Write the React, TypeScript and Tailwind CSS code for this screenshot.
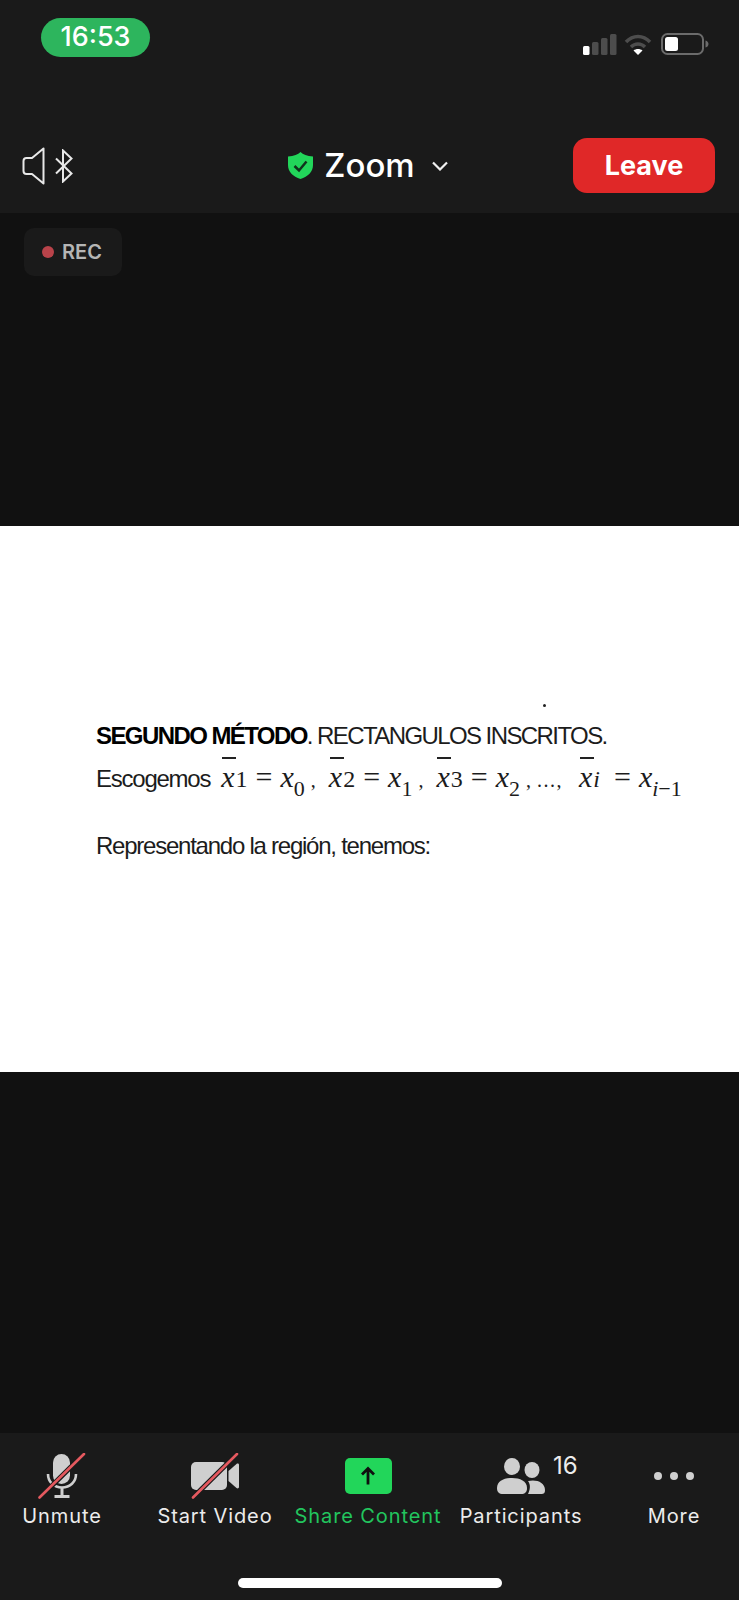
const MicIcon = () => (
  <svg width="48" height="46" viewBox="0 0 48 46" fill="none">
    <rect x="15" y="1" width="17" height="30" rx="8.500" fill="#cfcfcf" />
    <path d="M10 21c0 8 6 13.500 14 13.500S38 29 38 21" stroke="#cfcfcf" strokeWidth="2.600" />
    <path d="M24 35v7M16.500 43.500h15" stroke="#cfcfcf" strokeWidth="3" />
    <path d="M3 43.500 45 2" stroke="#1a1a1a" strokeWidth="5" />
    <path d="M1.500 44.500 46 1" stroke="#e5595f" strokeWidth="2.600" strokeLinecap="round" />
  </svg>
)

const VideoIcon = () => (
  <svg width="48" height="46" viewBox="0 0 48 46" fill="none">
    <rect x="0" y="9" width="36" height="28" rx="5" fill="#cfcfcf" />
    <path d="M37.500 18 45.500 11c1-.8 2.500-.3 2.500 1v22c0 1.300-1.500 1.800-2.500 1l-8-7z" fill="#cfcfcf" />
    <path d="M3 43.500 45 2" stroke="#1a1a1a" strokeWidth="5" />
    <path d="M2 44.500 46 1" stroke="#e5595f" strokeWidth="2.600" strokeLinecap="round" />
  </svg>
)

const ShareIcon = () => (
  <div className="flex h-[36px] w-[47px] items-center justify-center rounded-[5px] bg-[#22d65a]">
    <svg width="16" height="20" viewBox="0 0 16 20" fill="none">
      <path d="M8 18.500V3M2 8.500 8 2.500l6 6" stroke="#0f0f0f" strokeWidth="2.800" />
    </svg>
  </div>
)

const PeopleIcon = () => (
  <svg width="48" height="36" viewBox="0 0 48 36" fill="none">
    <ellipse cx="15" cy="8.500" rx="8" ry="8.500" fill="#cfcfcf" />
    <ellipse cx="35" cy="12" rx="7.500" ry="8" fill="#cfcfcf" />
    <path d="M0 30c0-7 7-10 15-10s15 3 15 10c0 4-2 6-6 6H6c-4 0-6-2-6-6z" fill="#cfcfcf" />
    <path d="M31 23c8-2 17 1 17 9 0 3-1 4-4 4H31c2-4 3-9 0-13z" fill="#cfcfcf" />
  </svg>
)

const DotsIcon = () => (
  <div className="flex h-[46px] items-center gap-[8px]">
    <span className="h-[8px] w-[8px] rounded-full bg-[#cfcfcf]" />
    <span className="h-[8px] w-[8px] rounded-full bg-[#cfcfcf]" />
    <span className="h-[8px] w-[8px] rounded-full bg-[#cfcfcf]" />
  </div>
)

const tabs = [
  { label: 'Unmute', icon: <MicIcon />, color: 'text-[#ececec]' },
  { label: 'Start Video', icon: <VideoIcon />, color: 'text-[#ececec]' },
  { label: 'Share Content', icon: <ShareIcon />, color: 'text-[#22c55e]' },
  { label: 'Participants', icon: <PeopleIcon />, color: 'text-[#ececec]', badge: '16' },
  { label: 'More', icon: <DotsIcon />, color: 'text-[#ececec]' },
]

// one x with the little bar on top of it
const BarX = ({ sub, italic }: { sub: string; italic?: boolean }) => (
  <span className="relative inline-flex items-baseline">
    <span className="absolute left-[1px] top-[0px] h-[2px] w-[14px] bg-[#222]" />
    <i>x</i>
    <span className={`ml-[1px] text-[24px] ${italic ? 'mr-[6px] italic' : ''}`}>{sub}</span>
  </span>
)

const Eq = ({ sub, last }: { sub: string; last?: boolean }) => (
  <span className="ml-[8px] inline-flex items-baseline">
    <span className="mr-[8px]">=</span>
    <i>x</i>
    {last ? (
      <span className="relative top-[9px] text-[22px]">
        <i>i</i>−1
      </span>
    ) : (
      <span className="relative top-[9px] text-[22px]">{sub}</span>
    )}
    {!last && <span className="ml-[6px] text-[20px]">,</span>}
  </span>
)

export default function App() {
  return (
    <div className="flex h-[1600px] w-[739px] flex-col overflow-hidden bg-[#111111] font-['Inter',sans-serif]">
      <header className="flex h-[213px] flex-col bg-[#1a1a1a]">
        <div className="flex items-start justify-between pl-[41px] pr-[30px] pt-[18px]">
          <div className="flex h-[39px] w-[109px] items-center justify-center rounded-full bg-[#2db55d] text-[27px] font-medium text-white">
            16:53
          </div>
          <div className="mt-[15px] flex items-center">
            <svg width="34" height="21" viewBox="0 0 34 21">
              <rect x="0" y="12" width="6.500" height="9" rx="1.500" fill="#fff" />
              <rect x="9" y="8" width="6.500" height="13" rx="1.500" fill="#4d4d4d" />
              <rect x="18" y="4" width="6.500" height="17" rx="1.500" fill="#4d4d4d" />
              <rect x="27" y="0" width="6.500" height="21" rx="1.500" fill="#4d4d4d" />
            </svg>
            <svg className="ml-[7px]" width="28" height="21" viewBox="0 0 28 21" fill="none">
              <path d="M2 8c7-7.500 17-7.500 24 0" stroke="#4d4d4d" strokeWidth="3.500" />
              <path d="M7 13c4-4 10-4 14 0" stroke="#4d4d4d" strokeWidth="3.500" />
              <path d="M9.500 16.500 14 21l4.500-4.500c-2.500-2-6.500-2-9 0z" fill="#fff" />
            </svg>
            <svg className="ml-[9px]" width="48" height="22" viewBox="0 0 48 22" fill="none">
              <rect x="1" y="1" width="41" height="20" rx="5.500" stroke="#6b6b6b" strokeWidth="2" />
              <rect x="4" y="4" width="13" height="14" rx="2.500" fill="#fff" />
              <path d="M44.500 7.500c2 .5 3 2 3 3.500s-1 3-3 3.500z" fill="#6b6b6b" />
            </svg>
          </div>
        </div>
        <div className="mt-[81px] flex items-center justify-between pl-[22px] pr-[24px]">
          <div className="flex w-[140px] items-center gap-[10px]">
            <svg width="23" height="38" viewBox="0 0 23 38" fill="none">
              <path d="M21.500 1.500v35L10 27H4.500C2.500 27 1.500 26 1.500 24V14c0-2 1-3 3-3H10z" stroke="#e8e8e8" strokeWidth="2" strokeLinejoin="round" />
            </svg>
            <svg width="18" height="34" viewBox="0 0 18 34" fill="none">
              <path d="M1 9.500 16.500 24.500 8 32.500V1.500l8.500 8L1 24.500" stroke="#e8e8e8" strokeWidth="2" />
            </svg>
          </div>
          <div className="ml-[1px] flex items-center">
            <svg width="25" height="27" viewBox="0 0 25 27">
              <path d="M12.500 0c2.500 2.500 6.500 4 12.500 4.500V13c0 7-5 11.500-12.500 14C5 24.500 0 20 0 13V4.500C6 4 10 2.500 12.500 0z" fill="#22d65a" />
              <path d="M6.500 14 11 18.500l7.500-9" fill="none" stroke="#10331c" strokeWidth="2.500" />
            </svg>
            <span className="ml-[11px] text-[33px] font-medium leading-none text-white">Zoom</span>
            <svg className="ml-[17px]" width="16" height="10" viewBox="0 0 16 10" fill="none">
              <path d="M1 1.500 8 8.500l7-7" stroke="#f0f0f0" strokeWidth="2.200" />
            </svg>
          </div>
          <button className="flex h-[55px] w-[142px] items-center justify-center rounded-[14px] bg-[#e02828] pt-[1px] text-[27px] font-bold text-white">
            Leave
          </button>
        </div>
      </header>

      <main className="flex flex-1 flex-col">
        <div className="h-[313px] pl-[24px] pt-[15px]">
          <div className="flex h-[48px] w-[98px] items-center gap-[8px] rounded-[10px] bg-[#1a1a1a] pl-[18px]">
            <span className="h-[12px] w-[12px] rounded-full bg-[#b9434a]" />
            <span className="text-[20px] font-semibold text-[#b5b5b5]">REC</span>
          </div>
        </div>

        <section className="flex h-[546px] flex-col bg-white pl-[96px] text-[#1c1c1c] font-['Liberation_Sans',sans-serif]">
          <span className="ml-[447px] mt-[178px] h-[3px] w-[3px] rounded-full bg-[#222]" />
          <p className="mt-[9px] whitespace-nowrap text-[24px] leading-[40px] tracking-[-1.580px]">
            <b className="text-black">SEGUNDO MÉTODO</b>. RECTANGULOS INSCRITOS.
          </p>
          <div className="mt-[1px] flex items-baseline whitespace-nowrap text-[24px] leading-[40px]">
            <span className="tracking-[-1.240px]">Escogemos</span>
            <span className="ml-[11px] inline-flex items-baseline font-['Liberation_Serif',serif] text-[30px]">
              <BarX sub="1" />
              <Eq sub="0" />
              <span className="w-[13px]" />
              <BarX sub="2" />
              <Eq sub="1" />
              <span className="w-[13px]" />
              <BarX sub="3" />
              <Eq sub="2" />
              <span className="ml-[6px] text-[20px] tracking-[1.500px]">..., </span>
              <span className="w-[16px]" />
              <BarX sub="i" italic />
              <Eq sub="i−1" last />
            </span>
          </div>
          <p className="mt-[26px] whitespace-nowrap text-[24px] leading-[40px] tracking-[-1.240px]">
            Representando la región, tenemos:
          </p>
        </section>

        <div className="h-[361px]" />
      </main>

      <footer className="flex h-[167px] flex-col bg-[#1a1a1a]">
        <nav className="flex justify-between pr-[3px] pt-[20px]">
          {tabs.map((t) => (
            <div key={t.label} className="relative flex w-[124px] flex-col items-center">
              <div className="flex h-[46px] items-center justify-center">{t.icon}</div>
              {t.badge && (
                <span className="absolute left-[94px] top-[1px] text-[24px] leading-[24px] text-[#ececec]">
                  {t.badge}
                </span>
              )}
              <span className={`mt-[5px] whitespace-nowrap text-[20px] leading-[24px] tracking-[0.900px] ${t.color}`}>
                {t.label}
              </span>
            </div>
          ))}
        </nav>
        <div className="mt-[50px] flex justify-center">
          <span className="h-[10px] w-[264px] rounded-full bg-white" />
        </div>
      </footer>
    </div>
  )
}
